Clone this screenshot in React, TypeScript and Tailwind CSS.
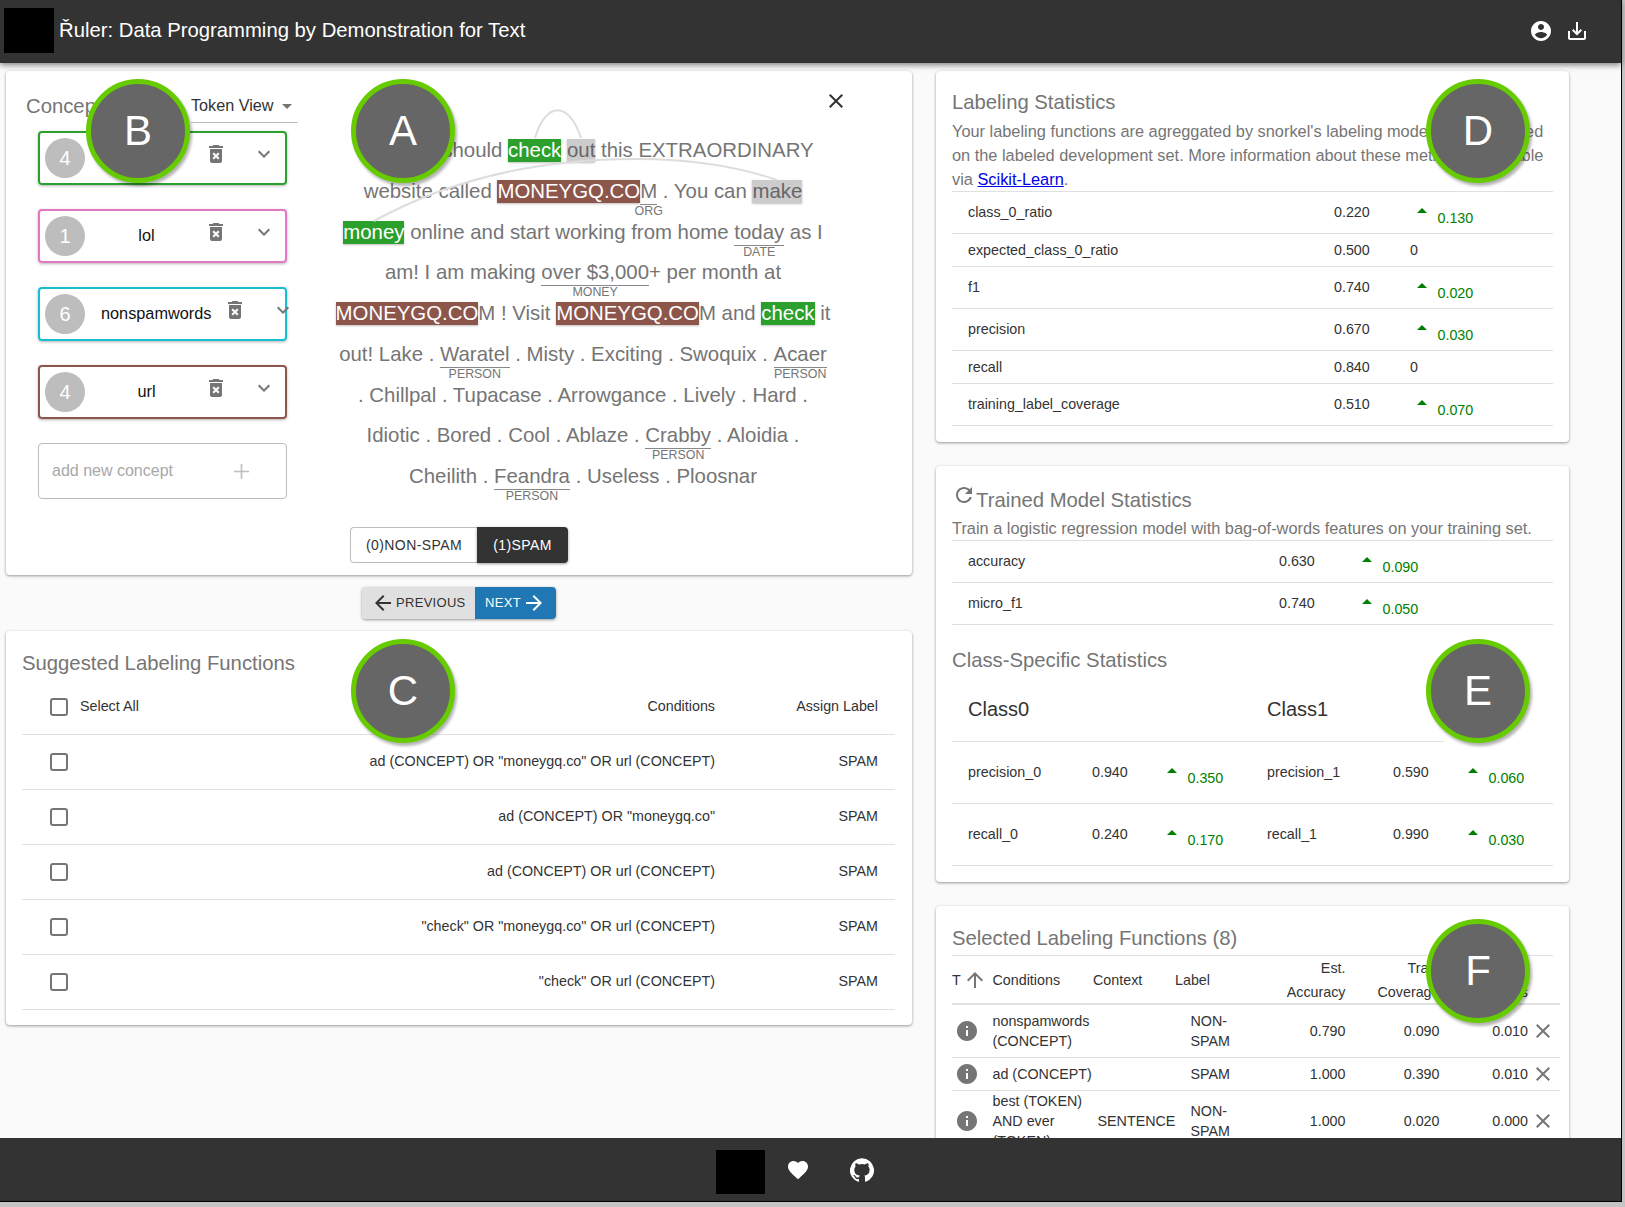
// Ruler: data programming by demonstration, annotation and statistics view

type Seg =
  | string
  | { hl: string; text: string; dark?: boolean }
  | { ent: string; text: string };

const GREEN = "bg-[#2ca02c] text-white";
const BROWN = "bg-[#8c564b] text-white";
const GREY = "bg-[#cccccc] text-[#666666]";

const LINES: Seg[][] = [
  ["You, truly should ", { hl: GREEN, text: "check" }, " ", { hl: GREY, text: "out" }, " this EXTRAORDINARY"],
  ["website called ", { hl: BROWN, text: "MONEYGQ.CO" }, { ent: "ORG", text: "M" }, " . You can ", { hl: GREY, text: "make" }],
  [{ hl: GREEN, text: "money" }, " online and start working from home ", { ent: "DATE", text: "today" }, " as I"],
  ["am! I am making ", { ent: "MONEY", text: "over $3,000" }, "+ per month at"],
  [{ hl: BROWN, text: "MONEYGQ.CO" }, "M ! Visit ", { hl: BROWN, text: "MONEYGQ.CO" }, "M and ", { hl: GREEN, text: "check" }, " it"],
  ["out! Lake . ", { ent: "PERSON", text: "Waratel" }, " . Misty . Exciting . Swoquix . ", { ent: "PERSON", text: "Acaer" }],
  [". Chillpal . Tupacase . Arrowgance . Lively . Hard ."],
  ["Idiotic . Bored . Cool . Ablaze . ", { ent: "PERSON", text: "Crabby" }, " . Aloidia ."],
  ["Cheilith . ", { ent: "PERSON", text: "Feandra" }, " . Useless . Ploosnar"],
];

const CONCEPTS = [
  { n: 4, name: "ad", border: "border-[#2ca02c]" },
  { n: 1, name: "lol", border: "border-[#e377c2]" },
  { n: 6, name: "nonspamwords", border: "border-[#17becf]" },
  { n: 4, name: "url", border: "border-[#8c564b]" },
];

const SUGGESTED = [
  'ad (CONCEPT) OR "moneygq.co" OR url (CONCEPT)',
  'ad (CONCEPT) OR "moneygq.co"',
  "ad (CONCEPT) OR url (CONCEPT)",
  '"check" OR "moneygq.co" OR url (CONCEPT)',
  '"check" OR url (CONCEPT)',
];

const LABEL_STATS = [
  { name: "class_0_ratio", value: "0.220", delta: "0.130" },
  { name: "expected_class_0_ratio", value: "0.500" },
  { name: "f1", value: "0.740", delta: "0.020" },
  { name: "precision", value: "0.670", delta: "0.030" },
  { name: "recall", value: "0.840" },
  { name: "training_label_coverage", value: "0.510", delta: "0.070" },
];

const SELECTED = [
  { cond: "nonspamwords (CONCEPT)", ctx: "", label: "NON-SPAM", a: "0.790", b: "0.090", c: "0.010", h: "h-[53px]" },
  { cond: "ad (CONCEPT)", ctx: "", label: "SPAM", a: "1.000", b: "0.390", c: "0.010", h: "h-[33px]" },
  { cond: "best (TOKEN) AND ever (TOKEN)", ctx: "SENTENCE", label: "NON-SPAM", a: "1.000", b: "0.020", c: "0.000", h: "h-[61px]" },
];

const MuiIcon = ({ d, className }: { d: string; className: string }) => (
  <svg viewBox="0 0 24 24" fill="currentColor" className={className}>
    <path d={d} />
  </svg>
);

const ICONS = {
  account: "M12 2C6.48 2 2 6.48 2 12s4.48 10 10 10 10-4.48 10-10S17.52 2 12 2zm0 3c1.66 0 3 1.34 3 3s-1.34 3-3 3-3-1.34-3-3 1.34-3 3-3zm0 14.2c-2.5 0-4.71-1.28-6-3.22.03-1.99 4-3.08 6-3.08 1.99 0 5.97 1.09 6 3.08-1.29 1.94-3.5 3.22-6 3.22z",
  save: "M19 12v7H5v-7H3v7c0 1.1.9 2 2 2h14c1.1 0 2-.9 2-2v-7h-2zm-6 .67l2.59-2.58L17 11.5l-5 5-5-5 1.41-1.41L11 12.67V3h2z",
  trash: "M6 19c0 1.1.9 2 2 2h8c1.1 0 2-.9 2-2V7H6v12zm2.46-7.12l1.41-1.41L12 12.59l2.12-2.12 1.41 1.41L13.41 14l2.12 2.12-1.41 1.41L12 15.41l-2.12 2.12-1.41-1.41L10.59 14l-2.13-2.12zM15.5 4l-1-1h-5l-1 1H5v2h14V4z",
  chevron: "M16.59 8.59L12 13.17 7.41 8.59 6 10l6 6 6-6z",
  close: "M19 6.41L17.59 5 12 10.59 6.41 5 5 6.41 10.59 12 5 17.59 6.41 19 12 13.41 17.59 19 19 17.59 13.41 12z",
  back: "M20 11H7.83l5.59-5.59L12 4l-8 8 8 8 1.41-1.41L7.83 13H20v-2z",
  forward: "M12 4l-1.41 1.41L16.17 11H4v2h12.17l-5.58 5.59L12 20l8-8z",
  up: "M4 12l1.41 1.41L11 7.83V20h2V7.83l5.58 5.59L20 12l-8-8-8 8z",
  info: "M12 2C6.48 2 2 6.48 2 12s4.48 10 10 10 10-4.48 10-10S17.52 2 12 2zm1 15h-2v-6h2v6zm0-8h-2V7h2v2z",
  refresh: "M17.65 6.35C16.2 4.9 14.21 4 12 4c-4.42 0-7.99 3.58-7.99 8s3.57 8 7.99 8c3.73 0 6.84-2.55 7.73-6h-2.08c-.82 2.33-3.04 4-5.65 4-3.31 0-6-2.69-6-6s2.69-6 6-6c1.66 0 3.14.69 4.22 1.78L13 11h7V4l-2.35 2.35z",
  heart: "M12 21.35l-1.45-1.32C5.4 15.36 2 12.28 2 8.5 2 5.42 4.42 3 7.5 3c1.74 0 3.41.81 4.5 2.09C13.09 3.81 14.76 3 16.5 3 19.58 3 22 5.42 22 8.5c0 3.78-3.4 6.86-8.55 11.54L12 21.35z",
  github: "M12 .3a12 12 0 0 0-3.8 23.4c.6.1.8-.3.8-.6v-2c-3.3.7-4-1.6-4-1.6-.6-1.4-1.4-1.8-1.4-1.8-1-.7.1-.7.1-.7 1.2 0 1.9 1.2 1.9 1.2 1 1.8 2.8 1.3 3.5 1 0-.8.4-1.3.7-1.6-2.7-.3-5.5-1.3-5.5-6 0-1.2.5-2.3 1.3-3.1-.2-.4-.6-1.6 0-3.2 0 0 1-.3 3.4 1.2a11.5 11.5 0 0 1 6 0c2.3-1.5 3.3-1.2 3.3-1.2.6 1.6.2 2.8 0 3.2.9.8 1.3 1.9 1.3 3.2 0 4.6-2.8 5.6-5.5 5.9.5.4.9 1 .9 2.2v3.3c0 .3.1.7.8.6A12 12 0 0 0 12 .3",
};

const Token = ({ seg }: { seg: Seg }) => {
  if (typeof seg === "string") return <span>{seg}</span>;
  if ("hl" in seg) {
    return (
      <span className={`inline-block leading-[23px] shadow-[0_1px_2px_rgba(0,0,0,0.25)] ${seg.hl}`}>{seg.text}</span>
    );
  }
  return (
    <span className="relative inline-block leading-[26px] border-b border-[#888888]">
      {seg.text}
      <span className="absolute top-full left-1/2 -translate-x-1/2 text-[12.4px] leading-[15px] text-[#757575]">
        {seg.ent}
      </span>
    </span>
  );
};

const Delta = ({ value, tri = "mr-[10.5px]" }: { value?: string; tri?: string }) =>
  value ? (
    <div className="flex ml-[7px] text-[14.3px] leading-[16px] text-[#008000]">
      <svg viewBox="0 0 10 5" className={`w-[10px] h-[5px] mt-[8px] ${tri}`} fill="#008000">
        <path d="M5 0l5 5H0z" />
      </svg>
      <span className="mt-[10px]">{value}</span>
    </div>
  ) : (
    <span className="text-[14.3px] text-[#333333]">0</span>
  );

const StatRow = ({ name, value, delta, nameW, short }: { name: string; value: string; delta?: string; nameW: string; short?: boolean }) => (
  <div className={`flex items-center pl-4 border-b border-[#e0e0e0] text-[14.3px] text-[#333333] ${short ? "h-[33px] pt-[2px]" : "h-[42px]"}`}>
    <div className={nameW}>{name}</div>
    <div className="w-[76px]">{value}</div>
    <Delta value={delta} />
  </div>
);

const ClassCell = ({ name, value, delta, first }: { name: string; value: string; delta: string; first?: boolean }) => (
  <div className={`flex items-center ${first ? "w-[299px]" : ""}`}>
    <div className={first ? "w-[124px]" : "w-[126px]"}>{name}</div>
    <div className="w-[68px]">{value}</div>
    <Delta value={delta} />
  </div>
);

const Card = ({ className, children }: { className: string; children: React.ReactNode }) => (
  <div className={`bg-white rounded-[4px] shadow-[0_1px_3px_rgba(0,0,0,0.4)] ${className}`}>{children}</div>
);

const Title = ({ children }: { children: React.ReactNode }) => (
  <h2 className="text-[20.3px] leading-[24px] text-[#757575] whitespace-nowrap">{children}</h2>
);

const Marker = ({ letter, pos }: { letter: string; pos: string }) => (
  <div className={`absolute ${pos} w-[104px] h-[104px] rounded-full bg-[#666666] border-[5px] border-[#66cc00] shadow-[2px_3px_3px_rgba(0,0,0,0.3)] flex items-center justify-center pb-[1px] text-white text-[42px] z-20`}>
    {letter}
  </div>
);

const App = () => {
  return (
    <div className="w-[1625px] h-[1207px] bg-[#c4c4c4] overflow-hidden" style={{ fontFamily: '"Liberation Sans", Arial, sans-serif' }}>
      <div className="relative w-[1622px] h-[1202px] flex flex-col bg-[#fafafa] border-r border-b border-black">
        {/* header */}
        <header className="relative z-10 h-[63px] shrink-0 bg-[#333333] text-white flex items-center pb-[2px] shadow-[0_2px_6px_rgba(0,0,0,0.5)]">
          <div className="w-[50px] h-[45px] bg-black ml-[4px] mr-[5px]" />
          <h1 className="flex-1 -mt-[1px] text-[20.3px] leading-[24px] whitespace-nowrap">Řuler: Data Programming by Demonstration for Text</h1>
          <MuiIcon d={ICONS.account} className="w-[24px] h-[24px] mr-[12.5px]" />
          <MuiIcon d={ICONS.save} className="w-[24px] h-[24px] mr-[32px]" />
        </header>

        <main className="flex-1 min-h-0 overflow-hidden flex items-start pt-[8px] pl-[6px]">
          {/* left column */}
          <div className="w-[906px] shrink-0 flex flex-col items-center">
            <Card className="relative w-full h-[504px] flex">
              <div className="w-[294px] shrink-0 pt-[22px] pl-[20px]">
                <div className="flex h-[30px]">
                  <div className="w-[165px] text-[20.3px] leading-[26px] text-[#757575]">Concepts</div>
                  <div className="w-[107px] flex text-[16.2px] leading-[25px] text-[#333333] border-b border-[#bdbdbd]">
                    <span>Token View</span>
                    <svg viewBox="0 0 10 5" className="w-[10px] h-[5px] ml-[8px] mt-[11px]" fill="#757575">
                      <path d="M0 0h10L5 5z" />
                    </svg>
                  </div>
                </div>
                <div className="mt-[8px] ml-[12px] w-[249px] flex flex-col gap-[24px]">
                  {CONCEPTS.map((c) => (
                    <div key={c.name} className={`h-[54px] border-2 rounded-[4px] flex items-center pl-[5px] shadow-[0_1px_3px_rgba(0,0,0,0.3)] ${c.border}`}>
                      <div className="w-[40px] h-[40px] shrink-0 rounded-full bg-[#bdbdbd] text-white text-[20px] flex items-center justify-center">
                        {c.n}
                      </div>
                      <div className="min-w-[119px] shrink-0 pl-[16px] pr-[12px] pb-[1px] text-center text-[16.3px] text-[#111111] whitespace-nowrap">
                        {c.name}
                      </div>
                      <MuiIcon d={ICONS.trash} className="w-[24px] h-[24px] shrink-0 -mt-2 text-[#757575]" />
                      <MuiIcon d={ICONS.chevron} className="w-[24px] h-[24px] shrink-0 ml-[24px] -mt-2 text-[#757575]" />
                    </div>
                  ))}
                  <div className="h-[56px] border border-[#bdbdbd] rounded-[4px] flex items-center pl-[13px] text-[16px] text-[#a8a8a8]">
                    <span className="w-[182px]">add new concept</span>
                    <svg viewBox="0 0 15 15" className="w-[15px] h-[15px]" stroke="#bdbdbd" strokeWidth="1.6">
                      <path d="M7.5 0v15M0 7.5h15" />
                    </svg>
                  </div>
                </div>
              </div>

              <div className="w-[566px] shrink-0 pt-[59px]">
                {LINES.map((line, i) => (
                  <div key={i} className="h-[40.75px] text-center whitespace-pre text-[20.4px] leading-[40.75px] text-[#757575]">
                    {line.map((seg, j) => (
                      <Token key={j} seg={seg} />
                    ))}
                  </div>
                ))}
                <div className="mt-[30.65px] ml-[50px] flex text-[14px] tracking-[0.4px] h-[36px]">
                  <div className="w-[127px] flex items-center justify-center border border-[#bdbdbd] border-r-0 rounded-l-[4px] text-[#333333]">
                    (0)NON-SPAM
                  </div>
                  <div className="w-[91px] flex items-center justify-center bg-[#333333] text-white rounded-r-[4px] shadow-[0_1px_3px_rgba(0,0,0,0.4)]">
                    (1)SPAM
                  </div>
                </div>
              </div>

              <MuiIcon d={ICONS.close} className="absolute left-[818px] top-[18px] w-[24px] h-[24px] text-[#333333]" />
              <svg className="absolute inset-0 w-full h-full pointer-events-none" fill="none" stroke="#dddddd" strokeWidth="2">
                <path d="M529 67C540 30 563 30 575 67" />
                <path d="M368 150C450 105 540 88 630 88C680 88 730 95 771 109" />
              </svg>
            </Card>

            <div className="mt-[12px] mb-[12px] flex h-[32px] text-[13px] rounded-[4px] shadow-[0_1px_3px_rgba(0,0,0,0.4)]">
              <div className="w-[113px] flex items-center pl-[9px] gap-[1px] bg-[#e0e0e0] text-[#333333] rounded-l-[4px] tracking-[0.3px]">
                <MuiIcon d={ICONS.back} className="w-[24px] h-[24px]" />
                PREVIOUS
              </div>
              <div className="w-[81px] flex items-center pl-[10px] gap-[1px] bg-[#1f77b4] text-white rounded-r-[4px] tracking-[0.3px]">
                NEXT
                <MuiIcon d={ICONS.forward} className="w-[24px] h-[24px]" />
              </div>
            </div>

            <Card className="w-full pt-[20px] pb-[15px] px-[16px]">
              <Title>Suggested Labeling Functions</Title>
              <div className="w-[873px] text-[14.3px] text-[#333333]">
                <div className="h-[60px] flex items-center border-b border-[#e0e0e0] pt-[4px] pl-[28px] pr-[17px]">
                  <div className="w-[18px] h-[18px] border-2 border-[#757575] rounded-[3px]" />
                  <span className="ml-[12px] flex-1">Select All</span>
                  <span>Conditions</span>
                  <span className="w-[163px] text-right">Assign Label</span>
                </div>
                {SUGGESTED.map((s) => (
                  <div key={s} className="h-[55px] flex items-center border-b border-[#e0e0e0] pl-[28px] pr-[17px]">
                    <div className="w-[18px] h-[18px] border-2 border-[#757575] rounded-[3px]" />
                    <span className="flex-1 text-right">{s}</span>
                    <span className="w-[163px] text-right">SPAM</span>
                  </div>
                ))}
              </div>
            </Card>
          </div>

          {/* right column */}
          <div className="ml-[24px] w-[633px] shrink-0 flex flex-col gap-[24px]">
            <Card className="pt-[19px] pb-[16px] px-[16px]">
              <Title>Labeling Statistics</Title>
              <p className="mt-[5px] text-[16.35px] leading-[24px] text-[#757575] whitespace-nowrap">
                Your labeling functions are agreggated by snorkel's labeling model, and evaluated
                <br />
                on the labeled development set. More information about these metrics is available
                <br />
                via <a className="text-[#0000ee] underline">Scikit-Learn</a>.
              </p>
              <div className="border-t border-[#e0e0e0] w-[601px]">
                {LABEL_STATS.map((r) => (
                  <StatRow key={r.name} name={r.name} value={r.value} delta={r.delta} nameW="w-[366px]" short={!r.delta} />
                ))}
              </div>
            </Card>

            <Card className="pt-[22px] pb-[16px] px-[16px]">
              <div className="flex">
                <MuiIcon d={ICONS.refresh} className="w-[24px] h-[24px] -mt-[5px] text-[#757575]" />
                <Title>Trained Model Statistics</Title>
              </div>
              <p className="mt-[4px] text-[16.35px] leading-[24px] text-[#757575] whitespace-nowrap">
                Train a logistic regression model with bag-of-words features on your training set.
              </p>
              <div className="border-t border-[#e0e0e0] w-[601px]">
                <StatRow name="accuracy" value="0.630" delta="0.090" nameW="w-[311px]" />
                <StatRow name="micro_f1" value="0.740" delta="0.050" nameW="w-[311px]" />
              </div>
              <div className="mt-[23px]">
                <Title>Class-Specific Statistics</Title>
              </div>
              <div className="w-[601px] text-[14.3px] text-[#333333]">
                <div className="w-[492px] h-[70px] flex items-center pt-[5px] pl-4 text-[20px] border-b border-[#e0e0e0]">
                  <span className="w-[299px]">Class0</span>
                  <span>Class1</span>
                </div>
                <div className="h-[62px] flex items-center pl-4 border-b border-[#e0e0e0]">
                  <ClassCell first name="precision_0" value="0.940" delta="0.350" />
                  <ClassCell name="precision_1" value="0.590" delta="0.060" />
                </div>
                <div className="h-[62px] flex items-center pl-4 border-b border-[#e0e0e0]">
                  <ClassCell first name="recall_0" value="0.240" delta="0.170" />
                  <ClassCell name="recall_1" value="0.990" delta="0.030" />
                </div>
              </div>
            </Card>

            <Card className="pt-[20px] px-[16px] pb-[17px]">
              <div className="pb-[5px] border-b border-[#e0e0e0] w-[601px]">
                <Title>Selected Labeling Functions (8)</Title>
              </div>
              <div className="w-[608px] text-[14.3px] leading-[20px] text-[#333333]">
                <div className="grid grid-cols-[40.5px_100.5px_82px_85.5px_85px_94px_88.5px_32px] h-[49px] items-center leading-[24px] border-b-2 border-[#e0e0e0]">
                  <div className="flex items-center">
                    T
                    <MuiIcon d={ICONS.up} className="w-[24px] h-[24px] ml-[2px] text-[#757575]" />
                  </div>
                  <div>Conditions</div>
                  <div>Context</div>
                  <div>Label</div>
                  <div className="text-right">
                    Est.
                    <br />
                    Accuracy
                  </div>
                  <div className="text-right">
                    Train
                    <br />
                    Coverage
                  </div>
                  <div className="text-right">
                    Dev
                    <br />
                    Matches
                  </div>
                  <div />
                </div>
                {SELECTED.map((r) => (
                  <div key={r.cond} className={`grid grid-cols-[40.5px_105px_93px_70px_85px_94px_88.5px_32px] items-center border-b border-[#e0e0e0] ${r.h}`}>
                    <MuiIcon d={ICONS.info} className="w-[24px] h-[24px] ml-[3px] text-[#757575]" />
                    <div className="pr-[2px]">{r.cond}</div>
                    <div>{r.ctx}</div>
                    <div className="pr-[20px]">{r.label}</div>
                    <div className="text-right">{r.a}</div>
                    <div className="text-right">{r.b}</div>
                    <div className="text-right">{r.c}</div>
                    <MuiIcon d={ICONS.close} className="w-[24px] h-[24px] ml-[3px] text-[#757575]" />
                  </div>
                ))}
              </div>
            </Card>
          </div>
        </main>

        {/* footer */}
        <footer className="relative z-10 h-[63px] shrink-0 bg-[#333333] text-white flex items-start pl-[716px] pt-[12px]">
          <div className="w-[49px] h-[44px] bg-black" />
          <MuiIcon d={ICONS.heart} className="w-[24px] h-[24px] ml-[21px] mt-[8px]" />
          <MuiIcon d={ICONS.github} className="w-[24px] h-[24px] ml-[40px] mt-[8px]" />
        </footer>

        {/* callout markers */}
        <Marker letter="A" pos="left-[351px] top-[79px]" />
        <Marker letter="B" pos="left-[86px] top-[79px]" />
        <Marker letter="C" pos="left-[351px] top-[639px]" />
        <Marker letter="D" pos="left-[1426px] top-[79px]" />
        <Marker letter="E" pos="left-[1426px] top-[639px]" />
        <Marker letter="F" pos="left-[1426px] top-[919px]" />
      </div>
    </div>
  );
};

export default App;
